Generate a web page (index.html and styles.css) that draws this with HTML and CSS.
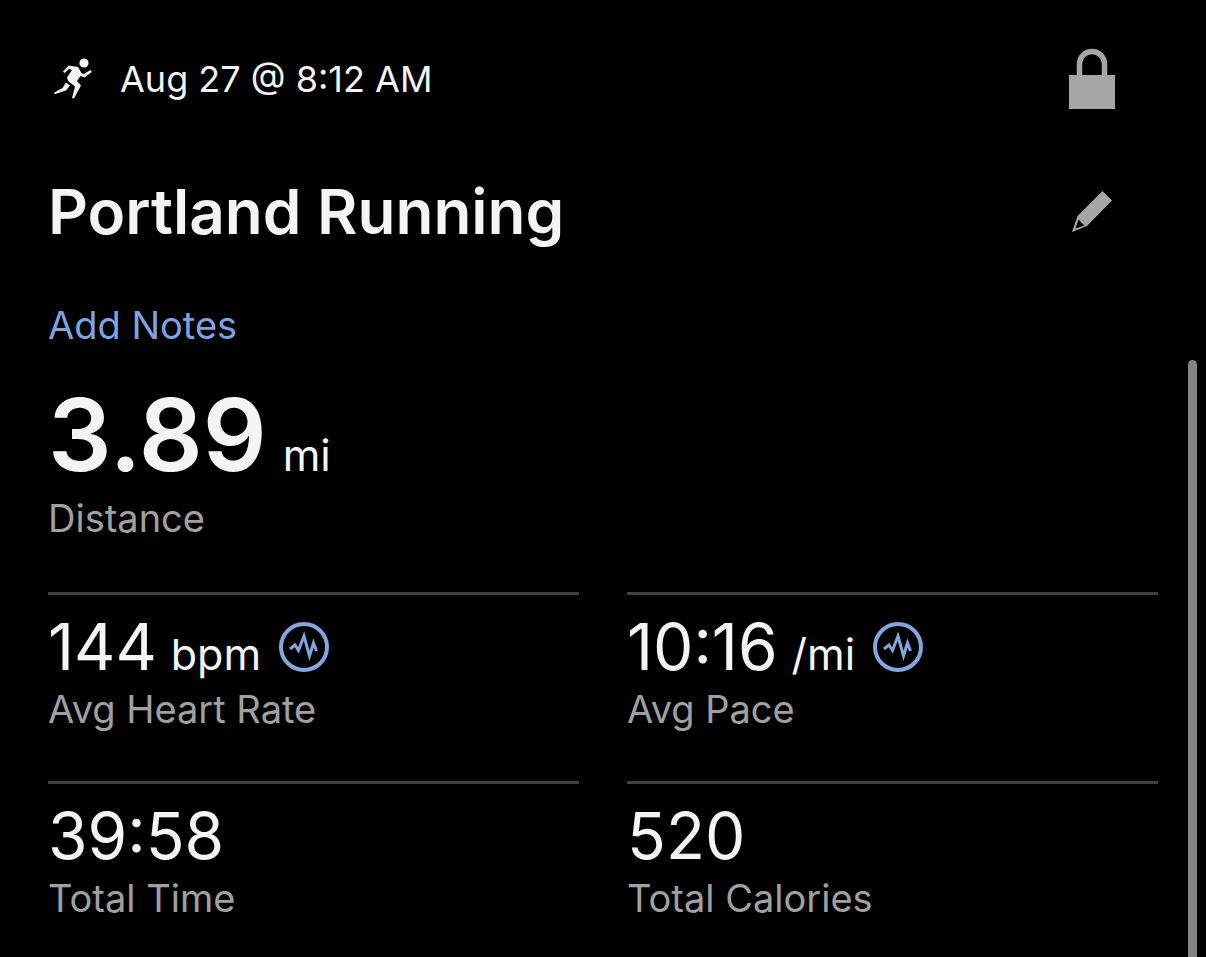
FILE: index.html
```
<!DOCTYPE html>
<html lang="en">
<head>
	<meta charset="UTF-8" />
	<meta name="viewport" content="width=device-width, initial-scale=1" />
	<title>Portland Running</title>
	<link rel="stylesheet" href="styles.css">
</head>
<body>
	<main class="workout">
		<div class="meta">
			<svg class="runner" viewBox="0 -1 80 70" aria-hidden="true">
				<circle cx="44" cy="18" r="4.6" />
				<path d="M28.500 20.500 L38 22 L41.500 28 L44 29 L50.500 25 L51.800 27 L44.500 32.500 L40.500 31 L37 36 L41 40.500 L34 53.500 L32 53 L35 41.500 L28 36 L27 32.500 L32 25 L29 24 L24.500 28 L23 26.500 Z" />
				<path d="M26 37.500 L30 40.500 L26 45.500 L14.500 49.300 L14 47.800 L22.500 43 Z" />
			</svg>
			<time class="date">Aug 27 @ 8:12 AM</time>
			<button type="button" class="icon-btn" aria-label="Privacy">
				<svg class="lock" viewBox="0 0 48 62">
					<path d="M11.500 28 V16 a12.500 12.500 0 0 1 25 0 V28" />
					<rect x="1" y="27" width="46" height="34" />
				</svg>
			</button>
		</div>
		<div class="heading">
			<h1>Portland Running</h1>
			<button type="button" class="icon-btn" aria-label="Edit name">
				<svg class="pencil" viewBox="0 0 48 48">
					<path fill-rule="evenodd" d="M34.500 3 L44 12.500 L19 38 L4 44 L9.500 28 Z M10.500 31.500 L7.500 40.500 L16.500 37.500 Z" />
				</svg>
			</button>
		</div>
		<a class="notes" href="#">Add Notes</a>
		<div class="distance">
			<div class="value">3.89 <span class="unit">mi</span></div>
			<div class="label">Distance</div>
		</div>
		<div class="stats">
			<div class="stat">
				<div class="value">144 <span class="unit">bpm</span>
					<button type="button" class="chart-btn" aria-label="Heart rate chart">
						<svg viewBox="0 0 50 50">
							<circle cx="25" cy="25" r="23" />
							<path d="M11 27 L16 23 L19.500 28.500 L25 14 L30.500 34 L34.500 21 L37.500 29" />
						</svg>
					</button>
				</div>
				<div class="label">Avg Heart Rate</div>
			</div>
			<div class="stat">
				<div class="value">10:16 <span class="unit">/mi</span>
					<button type="button" class="chart-btn" aria-label="Pace chart">
						<svg viewBox="0 0 50 50">
							<circle cx="25" cy="25" r="23" />
							<path d="M11 27 L16 23 L19.500 28.500 L25 14 L30.500 34 L34.500 21 L37.500 29" />
						</svg>
					</button>
				</div>
				<div class="label">Avg Pace</div>
			</div>
			<div class="stat">
				<div class="value">39:58</div>
				<div class="label">Total Time</div>
			</div>
			<div class="stat">
				<div class="value">520</div>
				<div class="label">Total Calories</div>
			</div>
		</div>
	</main>
	<div class="scroll-thumb"></div>
</body>
</html>
```
FILE: styles.css
```
body,h1,button {
	margin: 0;
	padding: 0;
	font-family: Inter, "Liberation Sans", sans-serif;
}
body {
	background-color: #000;
	color: #f4f4f4;
}
button {
	border: 0;
	background: none;
	cursor: pointer;
}
svg {
	display: block;
}
.workout {
	padding: 48px 48px 0;
}
.meta,.heading {
	display: flex;
	align-items: center;
}
.meta {
	height: 62px;
	margin-bottom: 64px;
}
.runner {
	width: 80px;
	height: 70px;
	margin-left: -8px;
	fill: #f4f4f4;
}
.date {
	font-size: 36px;
}
.icon-btn {
	width: 48px;
	margin-left: auto;
	margin-right: 42px;
}
.lock {
	width: 48px;
	height: 62px;
	fill: #a6a6a6;
}
.lock path {
	fill: none;
	stroke: #a6a6a6;
	stroke-width: 5.5;
}
.pencil {
	width: 48px;
	height: 48px;
	fill: #a6a6a6;
}
h1 {
	font-size: 62px;
	line-height: 76px;
	font-weight: 600;
}
.notes {
	display: block;
	width: fit-content;
	margin-top: 51px;
	color: #7ea3e0;
	font-size: 38px;
	line-height: 48px;
	text-decoration: none;
}
.distance {
	margin: 35px 0 50px;
}
.value {
	display: flex;
	align-items: baseline;
	gap: 14px;
	font-size: 64px;
	line-height: 72px;
}
.distance .value {
	gap: 16px;
	margin-bottom: 8px;
	font-size: 100px;
	line-height: 102px;
	font-weight: 600;
}
.unit {
	font-size: 43px;
	line-height: 48px;
	font-weight: 400;
}
.label {
	color: #a0a0a0;
	font-size: 38px;
	line-height: 48px;
}
.stats {
	display: grid;
	grid-template-columns: 1fr 1fr;
	gap: 48px;
}
.stat {
	border-top: 3px solid #414141;
	padding-top: 16px;
}
.stat .value {
	margin-bottom: 2px;
}
.chart-btn {
	align-self: center;
	margin-left: 4px;
}
.chart-btn svg {
	width: 50px;
	height: 50px;
	fill: none;
	stroke: #83a4dc;
	stroke-width: 4;
}
.chart-btn path {
	stroke-width: 3;
}
.scroll-thumb {
	position: fixed;
	top: 360px;
	right: 9px;
	bottom: 0;
	width: 9px;
	border-radius: 5px 5px 0 0;
	background-color: #848484;
}
```
